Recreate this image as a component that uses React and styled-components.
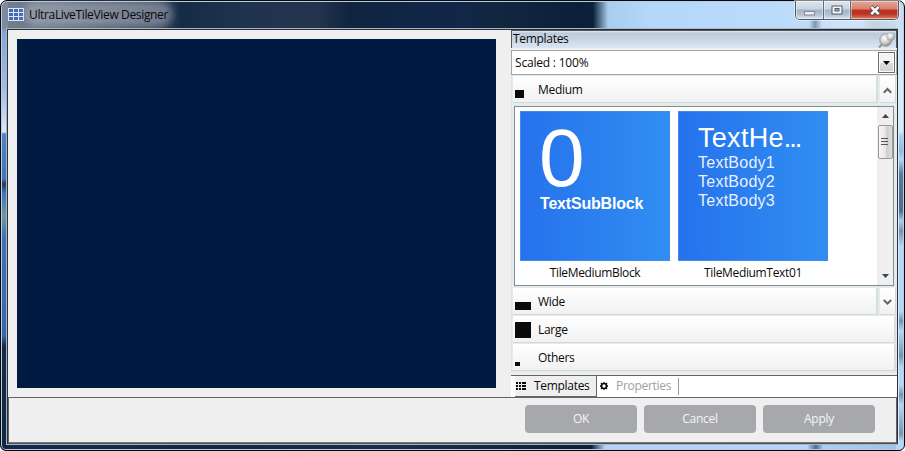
import React from 'react';
import styled, { createGlobalStyle } from 'styled-components';

const Global = createGlobalStyle`
  * { box-sizing: border-box; }
  html, body { margin: 0; padding: 0; background: #fff; overflow: hidden; }
  body { font-family: 'Open Sans', 'Noto Sans', sans-serif; font-size: 12px; color: #0a0a0a; }
  button { font: inherit; border: 0; padding: 0; margin: 0; }
  svg { display: block; flex: none; }
`;

const Label = styled.span`
  white-space: nowrap;
  line-height: 16px;
  letter-spacing: ${p => (p.$ls === undefined ? -0.3 : p.$ls)}px;
  margin-left: ${p => p.$ml || 0}px;
  margin-top: ${p => p.$mt || 0}px;
  color: ${p => p.$color || 'inherit'};
`;

const Window = styled.div`
  width: 905px;
  height: 451px;
  display: flex;
  flex-direction: column;
  padding: 0 5px 5px 4px;
  border: 1px solid #05080f;
  border-radius: 7px 7px 6px 6px;
  box-shadow: inset 0 0 0 1px #b9cde0;
  background:
    linear-gradient(180deg, #808999 0, #7b8ba4 26px, #86a5d6 32px, #9fbbe3 85px, #dce7f3 131px, #4c84c7 133px, #3f74bb 178px, #273852 183px, #3f74bb 192px, #70989f 215px, #3f72b8 236px, #3a66a9 335px, #172a45 345px, #102844 100%) 0 0 / 7px 100% no-repeat,
    linear-gradient(180deg, #c4daf0 0, #d9e9f8 75px, #d9e9f8 130px, #a9cff6 135px, #91b9e4 150px, #b4d6fa 158px, #5a789e 173px, #536b8e 210px, #a9cff6 220px, #7890ad 230px, #b4d6fa 245px, #b4d6fa 310px, #7792b1 320px, #b4d6fa 330px, #7792b1 355px, #b4d6fa 366px, #b4d6fa 384px, #7893b2 394px, #b4d6fa 404px, #7893b2 433px, #b4d6fa 440px) 100% 0 / 8px 100% no-repeat,
    linear-gradient(90deg, #13294a 0, #102844 220px, #182d4a 400px, #0d2039 590px, #b1d4f7 604px, #b4d6fa 806px, #4b6b8f 815px, #a9cff6 822px, #9dc2ea 100%) 0 100% / 100% 8px no-repeat,
    linear-gradient(90deg, #77808e 0, #626e7f 60px, #3d4b62 150px, #172b47 180px, #20334f 250px, #24344e 315px, #10243f 350px, #13264a 450px, #132741 490px, #0b1f39 580px, #0c203a 592px, #a9cdee 607px, #b4d7fa 650px, #bbdbfb 780px, #c2dcf4 808px, #8196b0 814px, #c9e0f8 821px, #d0e4f9 860px, #c5d5df 872px, #c9ddef 100%);
`;

const TitleBar = styled.header`
  height: 27px;
  flex: none;
  display: flex;
  align-items: flex-start;
  padding-left: 3px;
`;

const TitleIcon = styled.svg`
  margin-top: 7px;
`;

const TitleGlow = styled.div`
  display: flex;
  margin: 5px 0 0 5px;
  border-radius: 9px;
  background: rgba(187, 194, 204, .45);
  box-shadow: 0 0 7px 5px rgba(187, 194, 204, .45);
  height: 16px;
`;

const Captions = styled.div`
  display: flex;
  height: 19px;
  margin-left: auto;
  border: 1px solid #4d596a;
  border-top: 0;
  border-radius: 0 0 5px 5px;
  box-shadow: 0 0 0 1px rgba(255, 255, 255, .5);
  overflow: hidden;
`;

const Caption = styled.button`
  width: ${p => p.$w}px;
  display: flex;
  align-items: center;
  justify-content: center;
  border-right: ${p => (p.$close ? 0 : 1)}px solid #5d6a7b;
  box-shadow: inset 0 0 0 1px rgba(255, 255, 255, .45);
  background: ${p => (p.$close
    ? 'linear-gradient(#e6a595 0, #d88170 8px, #bf3020 9px, #b93424 13px, #e08060 18px)'
    : 'linear-gradient(#dce7f1 0, #c8d4e2 8px, #a3b3c7 9px, #b4c4d7 14px, #d7e8f5 18px)')};
`;

const Client = styled.main`
  flex: 1;
  display: flex;
  flex-direction: column;
  min-height: 0;
  margin-left: 1px;
  border: 1px solid #aab5bf;
  border-right-color: #e0eaf3;
`;

const ClientInner = styled.div`
  flex: 1;
  min-height: 0;
  display: flex;
  flex-direction: column;
  border: 1px solid #27313e;
  border-bottom-color: #4d5156;
  background: #efefef;
`;

const Work = styled.div`
  height: 367px;
  display: flex;
`;

const DesignArea = styled.section`
  width: 503px;
  padding: 9px 15px 9px 9px;
`;

const Canvas = styled.div`
  height: 349px;
  background: #001a41;
`;

const Side = styled.aside`
  flex: 1;
  min-width: 0;
  display: flex;
  flex-direction: column;
`;

const PanelHeader = styled.div`
  height: 18px;
  flex: none;
  display: flex;
  align-items: center;
  justify-content: space-between;
  padding: 0 0 0 1px;
  border-top: 1px solid #4f535c;
  border-left: 1px solid #55585e;
  border-right: 1px solid #55585e;
  background: linear-gradient(#e5edf4 0, #bccad9 2px, #c2d0df 6px, #dae6f3 100%);
`;

const Combo = styled.div`
  height: 25px;
  flex: none;
  margin-top: 2px;
  display: flex;
  align-items: center;
  justify-content: space-between;
  padding: 0 1px 0 3px;
  border: 1px solid #a2a5aa;
  background: #fff;
`;

const DropButton = styled.button`
  width: 17px;
  height: 21px;
  display: flex;
  align-items: center;
  justify-content: center;
  border: 1px solid #6e6e6e;
  box-shadow: inset 0 0 0 1px #fafafa;
  background: linear-gradient(#f3f3f3 50%, #dcdcdc 50%, #d0d0d0);
`;

const Explorer = styled.div`
  height: 298px;
  flex: none;
  padding: 1px 1px 4px 1px;
  border-left: 1px solid #dae6e6;
  background: #e3ecec;
`;

const Group = styled.div`
  height: 27px;
  margin-bottom: 1px;
  display: flex;
  gap: 2px;
`;

const GroupHeader = styled.div`
  flex: 1;
  display: flex;
  align-items: center;
  padding-left: 2px;
  border-right: 2px solid #d8dcdc;
  border-bottom: 1px solid #d4d8d8;
  background: linear-gradient(#fff, #f1f1f1);
`;

const SizeSlot = styled.div`
  width: 16px;
  height: 16px;
  display: flex;
  align-items: flex-end;
  align-self: flex-end;
  margin-bottom: 4px;
`;

const SizeMark = styled.div`
  width: ${p => p.$w}px;
  height: ${p => p.$h}px;
  background: #0a0a0a;
`;

const ScrollStep = styled.div`
  width: 16px;
  display: flex;
  align-items: center;
  justify-content: center;
  padding-top: 2px;
  border-right: 1px solid #d0d6d6;
  border-bottom: 1px solid #d4d8d8;
  background: linear-gradient(#fff, #f1f1f1);
`;

const Gallery = styled.div`
  height: 180px;
  margin: 3px 0 2px 1px;
  width: 380px;
  display: flex;
  justify-content: space-between;
  border: 1px solid #888990;
  background: #fff;
`;

const Items = styled.div`
  display: flex;
  gap: 8px;
  padding: 4px 0 0 5px;
`;

const Item = styled.figure`
  margin: 0;
  width: 150px;
  display: flex;
  flex-direction: column;
  align-items: center;
  gap: 4px;
`;

const Tile = styled.div`
  width: 150px;
  height: 150px;
  padding: 15px 0 0 20px;
  border: 1px solid #408af0;
  display: flex;
  flex-direction: column;
  align-items: flex-start;
  font-family: 'Liberation Sans', Arial, sans-serif;
  color: #fff;
  background: linear-gradient(90deg, #2672ec, #308ef1);
`;

const BlockNumber = styled.div`
  font-size: 82px;
  line-height: 66px;
  height: 69px;
  margin: -2px 0 0 -2px;
`;

const SubBlock = styled.div`
  font-size: 16px;
  font-weight: bold;
  line-height: 20px;
  letter-spacing: -.2px;
  margin-left: -1px;
`;

const Heading = styled.div`
  font-size: 27px;
  line-height: 28px;
  letter-spacing: .3px;
  margin: -3px 0 1px -1px;
`;

const Ellipsis = styled.span`
  letter-spacing: -2px;
`;

const BodyLine = styled.div`
  font-size: 16px;
  line-height: 19px;
  letter-spacing: .25px;
  color: #e9f1fd;
  margin-left: -1px;
`;

const Scrollbar = styled.div`
  width: 16px;
  display: flex;
  flex-direction: column;
  align-items: center;
  background: #efefef;
`;

const ArrowSlot = styled.div`
  height: 18px;
  display: flex;
  align-items: center;
`;

const Thumb = styled.div`
  width: 15px;
  height: 34px;
  margin-bottom: auto;
  display: flex;
  align-items: center;
  justify-content: center;
  border: 1px solid #999;
  border-radius: 2px;
  background: linear-gradient(90deg, #f6f6f6, #e6e6e6 50%, #cfcfcf 55%, #dcdcdc);
`;

const Tabs = styled.nav`
  height: 22px;
  margin-top: 2px;
  display: flex;
  padding-left: 4px;
  border-top: 1px solid #646464;
  background: #fff;
`;

const Tab = styled.div`
  width: ${p => (p.$active ? 82 : 81)}px;
  display: flex;
  align-items: center;
  padding: 0 0 1px ${p => (p.$active ? 1 : 3)}px;
  border-right: ${p => (p.$active ? 1 : 0)}px solid #646464;
  border-bottom: ${p => (p.$active ? 1 : 0)}px solid #646464;
  background: ${p => (p.$active ? '#efefef' : '#fff')};
`;

const TabDivider = styled.div`
  width: 1px;
  height: 17px;
  margin-top: 2px;
  background: #999;
`;

const Footer = styled.footer`
  flex: 1;
  display: flex;
  justify-content: flex-end;
  gap: 7px;
  padding: 7px 21px 0 0;
  border: 1px solid #646464;
  border-bottom-color: #777;
`;

const ActionButton = styled.button`
  width: 112px;
  height: 28px;
  padding-bottom: 1px;
  border-radius: 4px;
  background: #a7a8ac;
  color: #f5f5f5;
  letter-spacing: -.3px;
`;

const AppIcon = () => (
  <TitleIcon width="16" height="13" viewBox="0 0 16 13" shapeRendering="crispEdges">
    <rect width="16" height="13" fill="#dfe6f3" />
    {[1, 5, 9].map(y => [1, 6, 11].map(x => (
      <rect key={`${x}-${y}`} x={x} y={y} width="4" height="3" fill="#416bb7" />
    )))}
  </TitleIcon>
);

const Pin = () => (
  <svg width="18" height="16" viewBox="0 0 18 16">
    <defs>
      <radialGradient id="pin" cx=".4" cy=".35" r=".7">
        <stop offset="0" stopColor="#fff" /><stop offset=".5" stopColor="#d4d4d4" /><stop offset="1" stopColor="#888" />
      </radialGradient>
    </defs>
    <path d="M1 15.5 5 11.5" stroke="#909090" strokeWidth="2" />
    <ellipse cx="7.8" cy="8" rx="6" ry="6.2" fill="url(#pin)" stroke="#8b8b8b" strokeWidth=".8" />
    <path d="M7 4 11 8.5 15 7 11 1.2Z" fill="#dedede" />
    <circle cx="12.8" cy="4.6" r="4" fill="url(#pin)" stroke="#aaa" strokeWidth=".5" />
  </svg>
);

const Chevron = ({ down }) => (
  <svg width="9" height="7" viewBox="0 0 9 7">
    <path d={down ? 'M.8 1 4.5 4.7 8.2 1' : 'M.8 5.7 4.5 2 8.2 5.7'} fill="none" stroke="#626262" strokeWidth="2" />
  </svg>
);

const Triangle = ({ down, w = 7, h = 4, fill = '#444' }) => (
  <svg width={w} height={h} viewBox="0 0 7 4">
    <path d={down ? 'M0 0H7L3.5 4Z' : 'M0 4H7L3.5 0Z'} fill={fill} />
  </svg>
);

const GridIcon = () => (
  <svg width="10" height="8" viewBox="0 0 10 8" shapeRendering="crispEdges">
    {[0, 3, 6].map(y => [0, 3, 6].map(x => (
      <rect key={`${x}-${y}`} x={x} y={y} width={x === 6 ? 4 : 2} height="2" fill="#0a0a0a" />
    )))}
  </svg>
);

const Gear = () => (
  <svg width="8" height="8" viewBox="0 0 8 8">
    <circle cx="4" cy="4" r="2.5" fill="none" stroke="#0a0a0a" strokeWidth="1.6" />
    <path d="M4 0v1.2M4 6.8V8M0 4h1.2M6.8 4H8M1 1l1 1M6 6l1 1M1 7l1-1M6 2l1-1" stroke="#0a0a0a" strokeWidth="1.3" />
  </svg>
);

function TemplateGroup({ name, w, h, step }) {
  return (
    <Group>
      <GroupHeader>
        <SizeSlot><SizeMark $w={w} $h={h} /></SizeSlot>
        <Label $ml={7} $mt={2}>{name}</Label>
      </GroupHeader>
      {step && <ScrollStep><Chevron down={step === 'down'} /></ScrollStep>}
    </Group>
  );
}

export default function App() {
  return (
    <>
      <Global />
      <Window>
        <TitleBar>
          <AppIcon />
          <TitleGlow><Label $ls={-0.35} $mt={1}>UltraLiveTileView Designer</Label></TitleGlow>
          <Captions>
            <Caption $w={28} aria-label="Minimize">
              <svg width="12" height="12" viewBox="0 0 12 12"><rect x=".5" y="7.5" width="10" height="3.5" fill="#eee" stroke="#818b98" /></svg>
            </Caption>
            <Caption $w={27} aria-label="Maximize">
              <svg width="12" height="10" viewBox="0 0 12 10">
                <rect x="1" y="1" width="10" height="8" fill="#f7f7f7" stroke="#535b6c" />
                <rect x="4" y="3.5" width="4" height="2.5" fill="#8fb1d6" stroke="#535b6c" />
              </svg>
            </Caption>
            <Caption $w={47} $close aria-label="Close">
              <svg width="12" height="11" viewBox="0 0 12 11">
                <path d="M2 1.5 10 9.5M10 1.5 2 9.5" stroke="#5b5560" strokeWidth="4.2" />
                <path d="M2.3 1.8 9.7 9.2M9.7 1.8 2.3 9.2" stroke="#fff" strokeWidth="2.4" />
              </svg>
            </Caption>
          </Captions>
        </TitleBar>
        <Client>
          <ClientInner>
            <Work>
              <DesignArea><Canvas /></DesignArea>
              <Side>
                <PanelHeader><Label $mt={-1}>Templates</Label><Pin /></PanelHeader>
                <Combo>
                  <Label $ls={-0.2}>Scaled : 100%</Label>
                  <DropButton aria-label="Choose scale"><Triangle down fill="#000" /></DropButton>
                </Combo>
                <Explorer>
                  <TemplateGroup name="Medium" w={9} h={8} step="up" />
                  <Gallery>
                    <Items>
                      <Item>
                        <Tile><BlockNumber>0</BlockNumber><SubBlock>TextSubBlock</SubBlock></Tile>
                        <Label $ls={-0.35}>TileMediumBlock</Label>
                      </Item>
                      <Item>
                        <Tile>
                          <Heading>TextHe<Ellipsis>...</Ellipsis></Heading>
                          <BodyLine>TextBody1</BodyLine>
                          <BodyLine>TextBody2</BodyLine>
                          <BodyLine>TextBody3</BodyLine>
                        </Tile>
                        <Label $ls={-0.35}>TileMediumText01</Label>
                      </Item>
                    </Items>
                    <Scrollbar>
                      <ArrowSlot><Triangle /></ArrowSlot>
                      <Thumb>
                        <svg width="8" height="8" viewBox="0 0 8 8" shapeRendering="crispEdges">
                          <path d="M0 .5H7M0 3.5H7M0 6.5H7" stroke="#555" />
                        </svg>
                      </Thumb>
                      <ArrowSlot><Triangle down /></ArrowSlot>
                    </Scrollbar>
                  </Gallery>
                  <TemplateGroup name="Wide" w={16} h={8} step="down" />
                  <TemplateGroup name="Large" w={16} h={16} />
                  <TemplateGroup name="Others" w={5} h={4} />
                </Explorer>
                <Tabs>
                  <Tab $active><GridIcon /><Label $ml={8}>Templates</Label></Tab>
                  <Tab><Gear /><Label $ml={8} $color="#a0a0a0">Properties</Label></Tab>
                  <TabDivider />
                </Tabs>
              </Side>
            </Work>
            <Footer>
              <ActionButton>OK</ActionButton>
              <ActionButton>Cancel</ActionButton>
              <ActionButton>Apply</ActionButton>
            </Footer>
          </ClientInner>
        </Client>
      </Window>
    </>
  );
}
